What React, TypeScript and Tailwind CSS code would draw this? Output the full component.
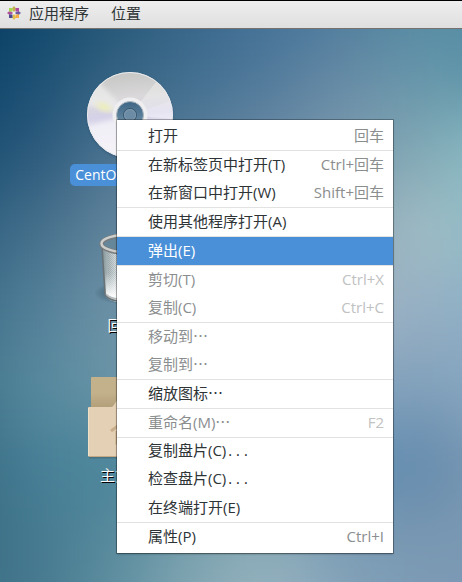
import React from "react";

type Item = {
  label: string;
  dots?: string;
  shortcut?: string;
  disabled?: boolean;
  active?: boolean;
};

const groups: Item[][] = [
  [{ label: "打开", shortcut: "回车" }],
  [
    { label: "在新标签页中打开(T)", shortcut: "Ctrl+回车" },
    { label: "在新窗口中打开(W)", shortcut: "Shift+回车" },
  ],
  [{ label: "使用其他程序打开(A)" }],
  [{ label: "弹出(E)", active: true }],
  [
    { label: "剪切(T)", shortcut: "Ctrl+X", disabled: true },
    { label: "复制(C)", shortcut: "Ctrl+C", disabled: true },
  ],
  [
    { label: "移动到", dots: "…", disabled: true },
    { label: "复制到", dots: "…", disabled: true },
  ],
  [{ label: "缩放图标", dots: "…" }],
  [{ label: "重命名(M)", dots: "…", shortcut: "F2", disabled: true }],
  [
    { label: "复制盘片(C)", dots: "..." },
    { label: "检查盘片(C)", dots: "..." },
    { label: "在终端打开(E)" },
  ],
  [{ label: "属性(P)", shortcut: "Ctrl+I" }],
];

function itemColor(item: Item) {
  if (item.active) return "bg-[#4a90d9] text-white";
  if (item.disabled) return "text-[#8b8e8f]";
  return "text-[#2e3436]";
}

function MenuRow({ item }: { item: Item }) {
  return (
    <button
      type="button"
      role="menuitem"
      disabled={item.disabled}
      className={`flex h-7 w-full items-center justify-between pb-0.5 pl-[31px] pr-[9px] text-left ${itemColor(item)}`}
    >
      <span>
        {item.label}
        {item.dots === "…" && <span className="font-['Noto_Sans_CJK_SC',sans-serif]">…</span>}
        {item.dots === "..." && <span className="font-['Liberation_Mono',monospace] text-[13px]">...</span>}
      </span>
      {item.shortcut && (
        <span className={item.disabled ? "text-[#c0c2c2]" : "text-[#8b8e8f]"}>{item.shortcut}</span>
      )}
    </button>
  );
}

// Colour samples of the wallpaper; the outer ring lies beyond the visible area.
const wallpaper = [
  ["#00355a", "#0c4569", "#235777", "#34658a", "#42719a", "#4a7899", "#548ba4", "#548ba4"],
  ["#0a4266", "#1b5074", "#33607f", "#406d8f", "#4f789a", "#648aa5", "#6494a9", "#5790a5"],
  ["#164c70", "#2b597c", "#4c7492", "#577c99", "#6a8ba5", "#7d9aae", "#80a8b4", "#8cc0c8"],
  ["#2c5f7e", "#456f8b", "#62859c", "#6d8ea5", "#7a98ad", "#8ea6b5", "#a2bec6", "#8cbcc6"],
  ["#3a6c87", "#54809a", "#6d92a6", "#7898ac", "#8aa3b5", "#a2b2c2", "#97b0c4", "#8ab0c6"],
  ["#427489", "#588a9e", "#6c95a7", "#7a9db0", "#85a3b5", "#87a4bf", "#82a1bb", "#8aa8c2"],
  ["#366980", "#488199", "#4a859a", "#5f90a3", "#6d98ab", "#6492b8", "#6289ab", "#7f9cb6"],
  ["#386b80", "#45798f", "#598b9d", "#7ba1ae", "#90aeba", "#7c9cb5", "#7997b1", "#7c99b3"],
  ["#3c7086", "#487b90", "#6292a3", "#88aab6", "#98b5c0", "#86a5bb", "#7e9cb6", "#7c9ab5"],
];

function Wallpaper() {
  return (
    <svg
      className="absolute inset-0 size-full"
      viewBox="80 80 480 560"
      preserveAspectRatio="none"
      aria-hidden="true"
    >
      <defs>
        <filter id="soften" x="-20%" y="-20%" width="140%" height="140%" colorInterpolationFilters="sRGB">
          <feGaussianBlur stdDeviation="35" />
        </filter>
      </defs>
      <g filter="url(#soften)">
        {wallpaper.map((row, r) =>
          row.map((fill, c) => {
            const left = c === 0 ? -120 : c * 80;
            const right = c === 7 ? 760 : (c + 1) * 80 + 1;
            const top = r === 0 ? -120 : r * 80;
            const bottom = r === 8 ? 840 : (r + 1) * 80 + 1;
            return (
              <rect key={`${r}-${c}`} x={left} y={top} width={right - left} height={bottom - top} fill={fill} />
            );
          }),
        )}
      </g>
    </svg>
  );
}

function AppsLogo() {
  return (
    <svg className="size-[14px]" viewBox="0 0 14 14" aria-hidden="true">
      <path d="M7 0l2 2.500-2 4.500-2-4.500z" fill="#c5b04f" />
      <path d="M14 7l-2.500 2L7 7l4.500-2z" fill="#6a5aa0" />
      <path d="M7 14l-2-2.500L7 7l2 4.500z" fill="#e3c04c" />
      <path d="M0 7l2.500-2L7 7 2.500 9z" fill="#b04f9c" />
      <path d="M2 2h3.500v3.500H2z" fill="#a6d850" />
      <path d="M8.500 2H12v3.500H8.500z" fill="#b04a9c" />
      <path d="M8.500 8.500H12V12H8.500z" fill="#f6ac44" />
      <path d="M2 8.500h3.500V12H2z" fill="#4b4a90" />
      <circle cx="7" cy="7" r="1.500" fill="#f3f0f0" />
    </svg>
  );
}

function Disc() {
  return (
    <svg className="size-24" viewBox="0 0 96 96" aria-hidden="true">
      <defs>
        <linearGradient id="disc" x1="0.4" y1="0" x2="0.5" y2="1">
          <stop offset="0" stopColor="#c6c6c4" />
          <stop offset="0.3" stopColor="#dad8da" />
          <stop offset="0.5" stopColor="#d5d1e8" />
          <stop offset="0.65" stopColor="#e6e4f0" />
          <stop offset="1" stopColor="#f2f1f5" />
        </linearGradient>
        <radialGradient id="glint">
          <stop offset="0" stopColor="#eceebb" />
          <stop offset="1" stopColor="#eceebb" stopOpacity="0" />
        </radialGradient>
        <linearGradient id="hole" x1="0" y1="0" x2="0" y2="1">
          <stop offset="0" stopColor="#3d6685" />
          <stop offset="1" stopColor="#7392aa" />
        </linearGradient>
        <filter id="discShade" x="-10%" y="-10%" width="120%" height="120%">
          <feGaussianBlur stdDeviation="1.5" />
        </filter>
        <filter id="sheen" x="-20%" y="-20%" width="140%" height="140%">
          <feGaussianBlur stdDeviation="2" />
        </filter>
        <clipPath id="discEdge">
          <circle cx="48" cy="48" r="43" />
        </clipPath>
      </defs>
      <circle cx="48" cy="49.500" r="42.500" fill="#1d3d55" opacity="0.55" filter="url(#discShade)" />
      <circle cx="48" cy="48" r="43" fill="url(#disc)" />
      <g clipPath="url(#discEdge)">
        <path d="M48 48L74 15A42 42 0 0 1 88 34z" fill="#f1f1ef" opacity="0.45" />
        <path d="M48 48L88 34A42 42 0 0 1 90 52z" fill="#ffffff" opacity="0.4" />
        <g filter="url(#sheen)">
          <path d="M48 48L2 38L14 12z" fill="#f6f6f4" opacity="0.55" />
          <path d="M48 48L2 60L8 90L40 94z" fill="#f6f5f9" opacity="0.7" />
        </g>
        <ellipse cx="22" cy="40" rx="12" ry="7" fill="url(#glint)" transform="rotate(20 22 40)" />
      </g>
      <circle cx="48" cy="48" r="42.500" fill="none" stroke="#e9ebee" />
      <circle cx="48" cy="48" r="15.500" fill="none" stroke="#efeff1" strokeWidth="4" />
      <circle cx="48" cy="48" r="13.500" fill="url(#hole)" stroke="#aeb8c0" />
      <circle cx="48" cy="48" r="6.500" fill="#6c8ba4" stroke="#38576e" />
      <circle cx="48" cy="48" r="5.500" fill="none" stroke="#8ba4b7" strokeWidth="0.6" />
    </svg>
  );
}

function Trash() {
  return (
    <svg className="size-24" viewBox="0 0 96 96" aria-hidden="true">
      <defs>
        <linearGradient id="bin" x1="0" y1="0" x2="1" y2="0">
          <stop offset="0" stopColor="#7d8f94" />
          <stop offset="0.1" stopColor="#a9b5b8" />
          <stop offset="0.25" stopColor="#dbe1e2" />
          <stop offset="1" stopColor="#8b999d" />
        </linearGradient>
        <linearGradient id="binFloor" x1="0" y1="0" x2="0" y2="1">
          <stop offset="0.45" stopColor="#fff" stopOpacity="0" />
          <stop offset="0.9" stopColor="#fff" stopOpacity="0.9" />
        </linearGradient>
        <pattern id="mesh" width="2" height="2" patternUnits="userSpaceOnUse">
          <path d="M0 0h1v1H0zM1 1h1v1H1z" fill="#71868d" opacity="0.3" />
        </pattern>
        <radialGradient id="binShade">
          <stop offset="0.5" stopColor="#22394a" stopOpacity="0.5" />
          <stop offset="1" stopColor="#22394a" stopOpacity="0" />
        </radialGradient>
      </defs>
      <g transform="translate(17 16)">
        <ellipse cx="31" cy="60" rx="36" ry="12" fill="url(#binShade)" />
        <path d="M3 11L6 62Q9 70 31 70T56 62L59 11z" fill="url(#bin)" />
        <path d="M8 18L10 60Q30 68 52 60L55 18z" fill="url(#mesh)" />
        <path d="M5 18L7 62Q30 72 55 62L57 18z" fill="url(#binFloor)" />
        <path d="M3 14L6 61Q9 69 31 69T56 61L59 14" fill="none" stroke="#697377" strokeWidth="1.6" />
        <path d="M7 61Q12 67 31 67T55 61" fill="none" stroke="#b9bdbd" strokeWidth="1.4" />
        <ellipse cx="31" cy="11" rx="28.500" ry="9" fill="#66869a" stroke="#777b7b" strokeWidth="4.500" />
        <ellipse cx="31" cy="10.500" rx="28.500" ry="9" fill="none" stroke="#cdcfcd" strokeWidth="2.500" />
      </g>
    </svg>
  );
}

function HomeFolder() {
  return (
    <svg className="size-24" viewBox="0 0 96 96" aria-hidden="true">
      <defs>
        <linearGradient id="back" x1="0" y1="0" x2="0" y2="1">
          <stop offset="0.5" stopColor="#c3b18c" />
          <stop offset="1" stopColor="#b19d78" />
        </linearGradient>
      </defs>
      <g transform="translate(6 10)">
        <rect x="3" y="0" width="78" height="32" rx="1" fill="url(#back)" />
        <path d="M1 80.500h82" stroke="#3c5f6e" strokeWidth="2" opacity="0.5" />
        <path d="M0 31q0-1 1-1h22q2 0 3-2l5-8h51q2 0 2 2v56q0 2-2 2H2q-2 0-2-2z" fill="#e4d0b4" />
        <path d="M1 79.500h82" stroke="#c4a984" />
        <path d="M.5 31v48" stroke="#f0dfc7" />
        <path d="M23 54L42 40l19 14M29 54v12h26V54" fill="none" stroke="#c8ae8c" strokeWidth="3" />
      </g>
    </svg>
  );
}

export default function App() {
  return (
    <div className="relative flex min-h-screen flex-col border-t border-black font-['Open_Sans','Noto_Sans_CJK_SC',sans-serif] text-[15px] leading-[22px]">
      <header className="flex h-7 items-center gap-2 border-b border-[#75716f] bg-gradient-to-b from-[#eeeeee] to-[#dfdfdf] pb-[3px] pl-[7px] text-[#2e3436]">
        <AppsLogo />
        <nav className="flex gap-[22px]">
          <button type="button">应用程序</button>
          <button type="button">位置</button>
        </nav>
      </header>

      <main className="relative flex-1 overflow-hidden">
        <Wallpaper />
        <ul className="relative ml-[70px] flex w-[120px] flex-col gap-[31px] pb-24 pt-[38px] text-white">
          <li className="flex flex-col items-center gap-px">
            <Disc />
            <span className="whitespace-nowrap rounded-[5px] bg-[#4a90d9] px-[5px] text-[14px]">CentOS 7 x86_64</span>
          </li>
          <li className="flex flex-col items-center gap-px">
            <Trash />
            <span className="[text-shadow:1px_1px_0_#000]">回收站</span>
          </li>
          <li className="flex flex-col items-center gap-px">
            <HomeFolder />
            <span className="[text-shadow:1px_1px_0_#000]">主文件夹</span>
          </li>
        </ul>
      </main>

      <div
        role="menu"
        className="absolute left-[117px] top-[119px] w-[276px] bg-white py-0.5 shadow-[0_0_0_1px_#00000044,0_1px_2px_#00000055]"
      >
        {groups.map((group, i) => (
          <div key={i} role="group" className={i > 0 ? "border-t border-[#e2e2e2]" : ""}>
            {group.map((item) => (
              <MenuRow key={item.label} item={item} />
            ))}
          </div>
        ))}
      </div>
    </div>
  );
}
